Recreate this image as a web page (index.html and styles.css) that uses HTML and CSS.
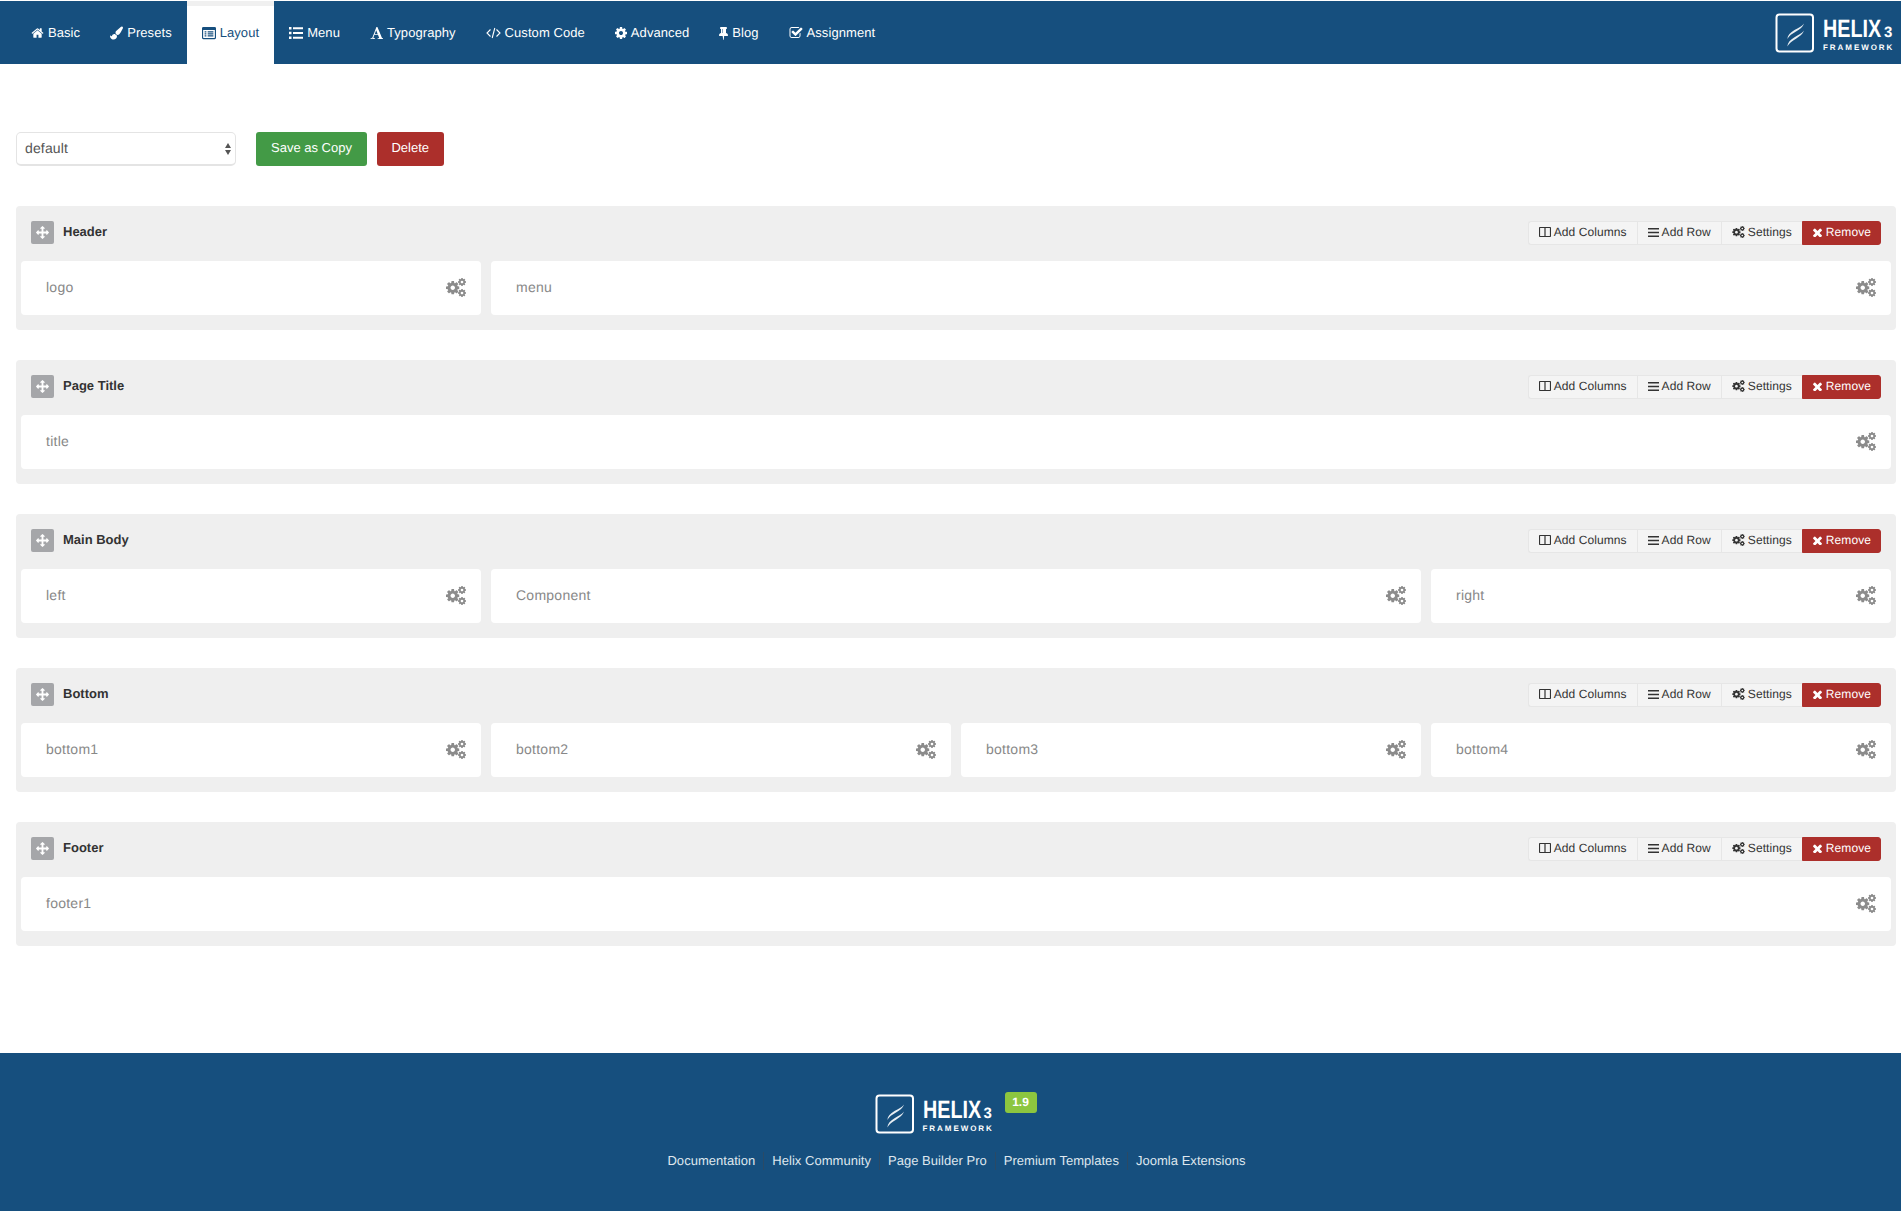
FILE: index.html
```html
<!DOCTYPE html>
<html lang="en">
<head>
<meta charset="utf-8">
<title>Helix3 Framework - Layout</title>
<link rel="stylesheet" href="styles.css">
</head>
<body>
<svg class="defs" aria-hidden="true">
  <symbol id="i-home" viewBox="0 0 1792 1792"><path d="M1472 992v480q0 26-19 45t-45 19h-384v-384h-256v384h-384q-26 0-45-19t-19-45v-480q0-1 .5-3t.5-3l575-474 575 474q1 2 1 6zm223-69l-62 74q-8 9-21 11h-3q-13 0-21-7l-692-577-692 577q-12 8-24 7-13-2-21-11l-62-74q-8-10-7-23.5t11-21.5l719-599q32-26 76-26t76 26l244 204v-195q0-14 9-23t23-9h192q14 0 23 9t9 23v408l219 182q10 8 11 21.5t-7 23.5z"/></symbol>
  <symbol id="i-brush" viewBox="0 0 1792 1792"><path d="M1615 0q70 0 122.5 46.5t52.5 116.5q0 63-45 151-332 629-465 752-97 91-218 91-126 0-216.5-92.5t-90.5-219.5q0-128 92-212l638-579q59-54 130-54zm-909 1034q39 76 106.5 130t150.5 76l1 71q4 213-129.5 347t-348.5 134q-123 0-218-46.5t-152.5-127.5-86.5-183-29-220q7 5 41 30t62 44.5 59 36.5 46 17q41 0 55-37 25-66 57.5-112.5t69.5-76 88-47.5 103-25.5 125-10.5z"/></symbol>
  <symbol id="i-listalt" viewBox="0 0 16 14"><path fill-rule="evenodd" d="M1.5 0h13A1.5 1.5 0 0 1 16 1.5v11a1.5 1.5 0 0 1-1.500 1.500h-13A1.500 1.500 0 0 1 0 12.500v-11A1.500 1.500 0 0 1 1.500 0zM1.300 3.500v8.700c0 .3.2.5.5.5h12.400c.3 0 .5-.2.5-.5V3.500zM3 5h2v1.300H3zm3.500 0H13v1.300H6.500zM3 7.300h2v1.300H3zm3.500 0H13v1.300H6.500zM3 9.600h2v1.300H3zm3.500 0H13v1.300H6.500z"/></symbol>
  <symbol id="i-list" viewBox="0 0 14 12"><path d="M0 0h2.500v2.500H0zM4 .2h10v2H4zM0 4.700h2.500v2.500H0zM4 5h10v2H4zM0 9.500h2.500V12H0zM4 9.800h10v2H4z"/></symbol>
  <symbol id="i-font" viewBox="0 0 1664 1792"><path d="M789 559l-170 450q33 0 136.500 2t160.500 2q19 0 57-2-87-253-184-452zm-725 1105l2-79q23-7 56-12.500t57-10.500 49.500-14.500 44.500-29 31-50.500l237-616 280-724h128q8 14 11 21l205 480q33 78 106 257.500t114 274.500q15 34 58 144.500t72 168.500q20 45 35 57 19 15 88 29.500t84 20.500q6 38 6 57 0 4-.5 13t-.5 13q-63 0-190-8t-191-8q-76 0-215 7t-178 8q0-43 4-78l131-28q1 0 12.500-2.500t15.500-3.500 14.500-4.500 15-6.500 11-8 9-11 2.500-14q0-16-31-96.500t-72-177.500-42-100l-450-2q-26 58-76.500 195.500t-50.500 162.500q0 22 14 37.500t43.500 24.500 48.500 13.500 57 8.500 41 4q1 19 1 58 0 9-2 27-58 0-174.500-10t-174.500-10q-8 0-26.500 4t-21.500 4q-80 14-188 14z"/></symbol>
  <symbol id="i-code" viewBox="0 0 15 12"><path d="M4.500 2.500 1 6l3.500 3.500M10.500 2.500 14 6l-3.500 3.500M8.800 1 6.200 11" fill="none" stroke="currentColor" stroke-width="1.100"/></symbol>
  <symbol id="i-cog" viewBox="128 128 1536 1536"><path d="M1152 896q0-106-75-181t-181-75-181 75-75 181 75 181 181 75 181-75 75-181zm512-109v222q0 12-8 23t-20 13l-185 28q-19 54-39 91 35 50 107 138 10 12 10 25t-9 23q-27 37-99 108t-94 71q-12 0-26-9l-138-108q-44 23-91 38-16 136-29 186-7 28-36 28h-222q-14 0-24.500-8.500t-11.500-21.500l-28-184q-49-16-90-37l-141 107q-10 9-25 9-14 0-25-11-126-114-165-168-7-10-7-23 0-12 8-23 15-21 51-66.500t54-70.500q-27-50-41-99l-183-27q-13-2-21-12.500t-8-23.500v-222q0-12 8-23t19-13l186-28q14-46 39-92-40-57-107-138-10-12-10-24 0-10 9-23 26-36 98.500-107.500t94.500-71.500q13 0 26 10l138 107q44-23 91-38 16-136 29-186 7-28 36-28h222q14 0 24.500 8.500t11.500 21.500l28 184q49 16 90 37l142-107q9-9 24-9 13 0 25 10 129 119 165 170 7 8 7 22 0 12-8 23-15 21-51 66.500t-54 70.500q26 50 41 98l183 28q13 2 21 12.500t8 23.500z"/></symbol>
  <symbol id="i-cogs" viewBox="0 0 20 19"><use href="#i-cog" x="0" y="3" width="13.500" height="13.500"/><use href="#i-cog" x="12" y="0" width="8" height="8"/><use href="#i-cog" x="12" y="11" width="8" height="8"/></symbol>
  <symbol id="i-tack" viewBox="0 0 1152 1792"><path d="M480 864v-448q0-14-9-23t-23-9-23 9-9 23v448q0 14 9 23t23 9 23-9 9-23zm672 352q0 26-19 45t-45 19h-429l-51 483q-2 12-10.500 20.500t-20.500 8.500h-1q-27 0-32-27l-76-485h-404q-26 0-45-19t-19-45q0-123 78.500-221.500t177.500-98.500v-512q-52 0-90-38t-38-90 38-90 90-38h640q52 0 90 38t38 90-38 90-90 38v512q99 0 177.500 98.500t78.500 221.500z"/></symbol>
  <symbol id="i-check" viewBox="0 128 1792 1536"><path d="M1472 930v318q0 119-84.500 203.500t-203.500 84.500h-832q-119 0-203.500-84.500t-84.500-203.500v-832q0-119 84.500-203.500t203.500-84.500h832q63 0 117 25 15 7 18 23 3 17-9 29l-49 49q-10 10-23 10-3 0-9-2-23-6-45-6h-832q-66 0-113 47t-47 113v832q0 66 47 113t113 47h832q66 0 113-47t47-113v-254q0-13 9-22l64-64q10-10 23-10 6 0 12 3 20 8 20 29zm231-489l-814 814q-24 24-57 24t-57-24l-430-430q-24-24-24-57t24-57l110-110q24-24 57-24t57 24l263 263 647-647q24-24 57-24t57 24l110 110q24 24 24 57t-24 57z"/></symbol>
  <symbol id="i-arrows" viewBox="0 0 1792 1792"><path d="M1792 896q0 26-19 45l-256 256q-19 19-45 19t-45-19-19-45v-128h-384v384h128q26 0 45 19t19 45-19 45l-256 256q-19 19-45 19t-45-19l-256-256q-19-19-19-45t19-45 45-19h128v-384h-384v128q0 26-19 45t-45 19-45-19l-256-256q-19-19-19-45t19-45l256-256q19-19 45-19t45 19 19 45v128h384v-384h-128q-26 0-45-19t-19-45 19-45l256-256q19-19 45-19t45 19l256 256q19 19 19 45t-19 45-45 19h-128v384h384v-128q0-26 19-45t45-19 45 19l256 256q19 19 19 45z"/></symbol>
  <symbol id="i-columns" viewBox="0 0 12 10"><path fill-rule="evenodd" d="M.8 0h10.400a.8.800 0 0 1 .8.800v8.400a.8.800 0 0 1-.8.800H.8a.8.800 0 0 1-.8-.800V.8A.8.800 0 0 1 .8 0zm.3 1.100v7.800h4.300V1.100zm5.500 0v7.800h4.300V1.100z"/></symbol>
  <symbol id="i-bars" viewBox="0 0 11 9"><path d="M0 0h11v1.500H0zM0 3.700h11v1.500H0zM0 7.400h11v1.500H0z"/></symbol>
  <symbol id="i-times" viewBox="298 298 1196 1196"><path d="M1490 1322q0 40-28 68l-136 136q-28 28-68 28t-68-28l-294-294-294 294q-28 28-68 28t-68-28l-136-136q-28-28-28-68t28-68l294-294-294-294q-28-28-28-68t28-68l136-136q28-28 68-28t68 28l294 294 294-294q28-28 68-28t68 28l136 136q28 28 28 68t-28 68l-294 294 294 294q28 28 28 68z"/></symbol>
  <symbol id="i-logomark" viewBox="0 0 40 41">
    <rect x="1.500" y="1.500" width="36.500" height="37" rx="3" fill="none" stroke="#fff" stroke-width="2"/>
    <path d="M29 10.500c-1.200 3.500-4 5.500-8 8-4 2.400-6.800 4-8.700 7.500.4-4 3-6.500 7.200-9 4-2.400 7.500-3.500 9.500-6.500zM29 17.500c-1.200 3.500-4 5.700-8 8.200-4 2.400-6.800 4.300-8.700 7.800.4-4 3-6.800 7.200-9.300 4-2.400 7.500-3.700 9.500-6.700z" fill="#fff" opacity=".9"/>
  </symbol>
</svg>

<nav class="topbar">
  <ul class="tabs">
    <li><a class="tab" href="#"><svg class="ic w13"><use href="#i-home"/></svg>Basic</a></li>
    <li><a class="tab" href="#"><svg class="ic w13"><use href="#i-brush"/></svg>Presets</a></li>
    <li><a class="tab active" href="#"><svg class="ic w14"><use href="#i-listalt"/></svg>Layout</a></li>
    <li><a class="tab" href="#"><svg class="ic w14"><use href="#i-list"/></svg>Menu</a></li>
    <li><a class="tab" href="#"><svg class="ic w13"><use href="#i-font"/></svg>Typography</a></li>
    <li><a class="tab" href="#"><svg class="ic w15"><use href="#i-code"/></svg>Custom Code</a></li>
    <li><a class="tab" href="#"><svg class="ic w12"><use href="#i-cog"/></svg>Advanced</a></li>
    <li><a class="tab" href="#"><svg class="ic w9"><use href="#i-tack"/></svg>Blog</a></li>
    <li><a class="tab" href="#"><svg class="ic w14"><use href="#i-check"/></svg>Assignment</a></li>
  </ul>
  <div class="logo">
    <svg class="logo-mark"><use href="#i-logomark"/></svg>
    <div class="logo-text">
      <div class="logo-top"><span class="logo-name">HELIX</span><span class="logo-three">3</span></div>
      <div class="logo-sub">FRAMEWORK</div>
    </div>
  </div>
</nav>

<main class="content">
  <div class="toolbar">
    <div class="select"><span class="select-value">default</span><span class="carets"><i class="caret-up"></i><i class="caret-down"></i></span></div>
    <a class="btn btn-green" href="#">Save as Copy</a>
    <a class="btn btn-red" href="#">Delete</a>
  </div>

  <section class="row-box">
    <header class="row-head">
      <span class="move"><svg><use href="#i-arrows"/></svg></span><h3>Header</h3>
      <div class="group">
        <a href="#"><svg class="g-col"><use href="#i-columns"/></svg>Add Columns</a><a href="#"><svg class="g-bar"><use href="#i-bars"/></svg>Add Row</a><a href="#"><svg class="g-cog"><use href="#i-cogs"/></svg>Settings</a><a class="rm" href="#"><svg class="g-x"><use href="#i-times"/></svg>Remove</a>
      </div>
    </header>
    <div class="cols">
      <div class="col s3">logo<svg class="gear"><use href="#i-cogs"/></svg></div>
      <div class="col s9">menu<svg class="gear"><use href="#i-cogs"/></svg></div>
    </div>
  </section>

  <section class="row-box">
    <header class="row-head">
      <span class="move"><svg><use href="#i-arrows"/></svg></span><h3>Page Title</h3>
      <div class="group">
        <a href="#"><svg class="g-col"><use href="#i-columns"/></svg>Add Columns</a><a href="#"><svg class="g-bar"><use href="#i-bars"/></svg>Add Row</a><a href="#"><svg class="g-cog"><use href="#i-cogs"/></svg>Settings</a><a class="rm" href="#"><svg class="g-x"><use href="#i-times"/></svg>Remove</a>
      </div>
    </header>
    <div class="cols">
      <div class="col s12">title<svg class="gear"><use href="#i-cogs"/></svg></div>
    </div>
  </section>

  <section class="row-box">
    <header class="row-head">
      <span class="move"><svg><use href="#i-arrows"/></svg></span><h3>Main Body</h3>
      <div class="group">
        <a href="#"><svg class="g-col"><use href="#i-columns"/></svg>Add Columns</a><a href="#"><svg class="g-bar"><use href="#i-bars"/></svg>Add Row</a><a href="#"><svg class="g-cog"><use href="#i-cogs"/></svg>Settings</a><a class="rm" href="#"><svg class="g-x"><use href="#i-times"/></svg>Remove</a>
      </div>
    </header>
    <div class="cols">
      <div class="col s3">left<svg class="gear"><use href="#i-cogs"/></svg></div>
      <div class="col s6">Component<svg class="gear"><use href="#i-cogs"/></svg></div>
      <div class="col s3">right<svg class="gear"><use href="#i-cogs"/></svg></div>
    </div>
  </section>

  <section class="row-box">
    <header class="row-head">
      <span class="move"><svg><use href="#i-arrows"/></svg></span><h3>Bottom</h3>
      <div class="group">
        <a href="#"><svg class="g-col"><use href="#i-columns"/></svg>Add Columns</a><a href="#"><svg class="g-bar"><use href="#i-bars"/></svg>Add Row</a><a href="#"><svg class="g-cog"><use href="#i-cogs"/></svg>Settings</a><a class="rm" href="#"><svg class="g-x"><use href="#i-times"/></svg>Remove</a>
      </div>
    </header>
    <div class="cols">
      <div class="col s3">bottom1<svg class="gear"><use href="#i-cogs"/></svg></div>
      <div class="col s3">bottom2<svg class="gear"><use href="#i-cogs"/></svg></div>
      <div class="col s3">bottom3<svg class="gear"><use href="#i-cogs"/></svg></div>
      <div class="col s3">bottom4<svg class="gear"><use href="#i-cogs"/></svg></div>
    </div>
  </section>

  <section class="row-box">
    <header class="row-head">
      <span class="move"><svg><use href="#i-arrows"/></svg></span><h3>Footer</h3>
      <div class="group">
        <a href="#"><svg class="g-col"><use href="#i-columns"/></svg>Add Columns</a><a href="#"><svg class="g-bar"><use href="#i-bars"/></svg>Add Row</a><a href="#"><svg class="g-cog"><use href="#i-cogs"/></svg>Settings</a><a class="rm" href="#"><svg class="g-x"><use href="#i-times"/></svg>Remove</a>
      </div>
    </header>
    <div class="cols">
      <div class="col s12">footer1<svg class="gear"><use href="#i-cogs"/></svg></div>
    </div>
  </section>
</main>

<footer class="foot">
  <div class="foot-brand">
    <div class="logo">
      <svg class="logo-mark"><use href="#i-logomark"/></svg>
      <div class="logo-text">
        <div class="logo-top"><span class="logo-name">HELIX</span><span class="logo-three">3</span></div>
        <div class="logo-sub">FRAMEWORK</div>
      </div>
    </div>
    <span class="badge">1.9</span>
  </div>
  <ul class="foot-links">
    <li><a href="#">Documentation</a></li>
    <li><a href="#">Helix Community</a></li>
    <li><a href="#">Page Builder Pro</a></li>
    <li><a href="#">Premium Templates</a></li>
    <li><a href="#">Joomla Extensions</a></li>
  </ul>
</footer>
</body>
</html>
```
FILE: styles.css
```css
* { box-sizing: border-box; }
html, body { margin: 0; padding: 0; }
body {
  padding-top: 1px;
  background: #fff;
  color: #333;
  font: 13px/18px "Liberation Sans", Arial, sans-serif;
  text-rendering: geometricPrecision;
}
a { color: inherit; text-decoration: none; }
ul { list-style: none; margin: 0; padding: 0; }
svg { fill: currentColor; flex: none; }
.defs { width: 0; height: 0; overflow: hidden; display: block; }

.topbar {
  height: 63px;
  background: #164f7e;
  display: flex;
  justify-content: space-between;
  align-items: flex-start;
  padding: 0 6px 0 16px;
  color: #fff;
}
.tabs { display: flex; }
.tab {
  height: 63px;
  padding: 0 15px;
  display: flex;
  align-items: center;
  gap: 4px;
  color: #fff;
  letter-spacing: .07px;
}
.tab.active {
  background: #fff;
  color: #164f7e;
  border-top: 5px solid #f0f0f0;
  padding-bottom: 5px;
}
.ic { height: 14px; }
.w9 { width: 9px; }
.w12 { width: 12px; }
.w13 { width: 13px; }
.w14 { width: 14px; }
.w15 { width: 15px; }

.topbar > .logo { margin-top: 12px; }
.logo { width: 120px; height: 41px; color: #fff; display: flex; gap: 8px; }
.logo-mark { width: 40px; height: 41px; }
.logo-text { padding-top: 6px; width: 72px; }
.logo-top { display: flex; align-items: baseline; height: 20px; line-height: 20px; }
.logo-name {
  flex: none;
  width: 58px;
  font: 700 25px/20px "Liberation Sans", sans-serif;
  transform: scaleX(.79);
  transform-origin: left center;
  white-space: nowrap;
}
.logo-three { font: 700 15px/20px "Liberation Sans", sans-serif; margin-left: 3px; }
.logo-sub { font: 700 8px/9px "Liberation Sans", sans-serif; letter-spacing: 1.95px; margin-top: 4px; white-space: nowrap; }

.content { padding: 68px 5px 0 16px; }
.toolbar { display: flex; align-items: stretch; height: 34px; margin-bottom: 40px; }
.select {
  width: 220px;
  border: 1px solid #e4e4e4;
  border-bottom-width: 2px;
  border-radius: 5px;
  padding: 0 8px;
  display: flex;
  align-items: center;
  justify-content: space-between;
  font-size: 14px;
  color: #555;
  margin-right: 20px;
}
.select-value { margin-top: -1px; letter-spacing: .15px; }
.carets { display: flex; flex-direction: column; gap: 2px; margin-right: -4px; }
.caret-up, .caret-down { width: 0; height: 0; border: 3px solid transparent; }
.caret-up { border-top: 0; border-bottom: 5px solid #555; }
.caret-down { border-bottom: 0; border-top: 5px solid #555; }
.btn {
  display: flex;
  align-items: center;
  padding: 0 15px 2px;
  border-radius: 3px;
  color: #fff;
  margin-right: 10px;
}
.btn-green { background: #439a46; }
.btn-red { background: #ac2f2b; padding-left: 14.5px; padding-right: 14.5px; }

.row-box {
  background: #efefef;
  border-radius: 4px;
  padding: 0 5px 15px;
  height: 124px;
  margin-bottom: 30px;
}
.row-head {
  height: 55px;
  display: flex;
  align-items: center;
  padding: 0 10px 2px;
}
.row-head h3 { margin: 0 0 0 9px; padding-bottom: 1px; font-size: 13px; font-weight: 700; color: #333; }
.move {
  width: 23px;
  height: 23px;
  background: #a5a6a9;
  border-radius: 2px;
  color: #fff;
  display: flex;
  align-items: center;
  justify-content: center;
}
.move svg { width: 13px; height: 13px; }
.group {
  margin-left: auto;
  display: flex;
  height: 24px;
  font-size: 12px;
  color: #333;
  letter-spacing: .08px;
}
.group a {
  display: flex;
  align-items: center;
  gap: 3px;
  padding: 0 10px 1px;
  background: #f4f4f4;
  border: 1px solid #e6e6e6;
  border-right-width: 0;
}
.group a:first-child { border-radius: 3px 0 0 3px; }
.group .rm { background: #ac2f2b; border-color: #ac2f2b; color: #fff; border-radius: 0 3px 3px 0; border-right-width: 1px; gap: 4px; padding-right: 9px; }
.g-col { width: 12px; height: 10px; }
.g-bar { width: 11px; height: 9px; }
.g-cog { width: 13px; height: 12px; }
.g-x { width: 9px; height: 9px; }

.cols { display: grid; grid-template-columns: repeat(12, 1fr); gap: 10px; }
.col {
  height: 54px;
  background: #fff;
  border-radius: 4px;
  padding: 0 15px 2px 25px;
  display: flex;
  align-items: center;
  justify-content: space-between;
  font-size: 14px;
  color: #888;
  letter-spacing: .25px;
}
.s3 { grid-column: span 3; }
.s6 { grid-column: span 6; }
.s9 { grid-column: span 9; }
.s12 { grid-column: span 12; }
.gear { width: 20px; height: 19px; color: #8b8b8b; }

.foot {
  margin-top: 107px;
  height: 158px;
  background: #164f7e;
  color: #fff;
  padding: 39px 0 0 10px;
}
.foot-brand { display: flex; justify-content: center; align-items: flex-start; gap: 10px; }
.foot-brand .logo { margin-top: 2px; }
.badge {
  width: 32px;
  height: 21px;
  background: #8cc63f;
  border-radius: 3px;
  font-size: 12px;
  font-weight: 700;
  line-height: 21px;
  text-align: center;
}
.foot-links { display: flex; justify-content: center; margin-top: 17px; color: #dfe7ee; letter-spacing: .03px; padding-left: 2px; }
.foot-links li { padding: 0 8px; border-left: 1px solid #2a4a66; line-height: 18px; }
.foot-links li:first-child { border-left: 0; }
```
